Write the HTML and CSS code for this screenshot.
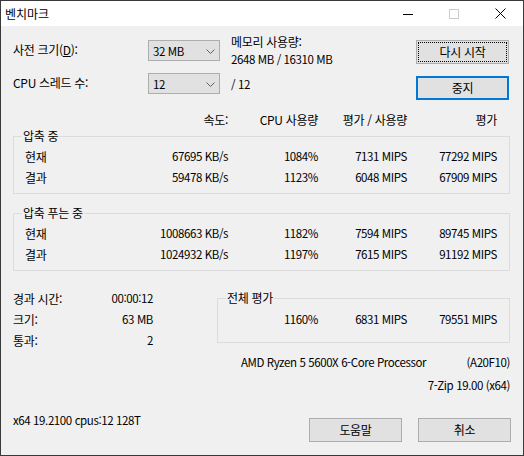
FILE: index.html
```html
<!DOCTYPE html>
<html lang="ko">
<head>
<meta charset="utf-8">
<title>벤치마크</title>
<link rel="stylesheet" href="styles.css">
</head>
<body>
<div class="window">
  <div class="titlebar">
    <span class="title">벤치마크</span>
    <div class="caption">
      <span class="cbtn"><svg width="10" height="10" viewBox="0 0 10 10"><line x1="0" y1="5.5" x2="10" y2="5.5" stroke="#000" stroke-width="1"/></svg></span>
      <span class="cbtn"><svg width="10" height="10" viewBox="0 0 10 10"><rect x="0.5" y="0.5" width="9" height="9" fill="none" stroke="#cccccc" stroke-width="1"/></svg></span>
      <span class="cbtn"><svg width="11" height="11" viewBox="0 0 11 11"><path d="M0.5 0.5 L10.5 10.5 M10.5 0.5 L0.5 10.5" stroke="#000" stroke-width="1" fill="none"/></svg></span>
    </div>
  </div>
  <div class="client">
    <div class="top">
      <div class="lbl">사전 크기(<u>D</u>):</div>
      <div class="combo"><span class="num">32 MB</span><svg class="chev" width="9" height="5" viewBox="0 0 9 5"><polyline points="0.5,0.5 4.5,4.5 8.5,0.5" fill="none" stroke="#606060" stroke-width="1"/></svg></div>
      <div class="mem">메모리 사용량:<br><span class="num">2648 MB / 16310 MB</span></div>
      <button class="btn focus">다시 시작</button>
      <div class="lbl">CPU 스레드 수:</div>
      <div class="combo"><span class="num">12</span><svg class="chev" width="9" height="5" viewBox="0 0 9 5"><polyline points="0.5,0.5 4.5,4.5 8.5,0.5" fill="none" stroke="#606060" stroke-width="1"/></svg></div>
      <div class="threads num">/ 12</div>
      <button class="btn default">중지</button>
    </div>

    <div class="hdr">
      <span>속도:</span><span>CPU 사용량</span><span>평가 / 사용량</span><span>평가</span>
    </div>

    <fieldset class="group">
      <legend>압축 중</legend>
      <div class="row"><span class="name">현재</span><span>67695 KB/s</span><span>1084%</span><span>7131 MIPS</span><span>77292 MIPS</span></div>
      <div class="row"><span class="name">결과</span><span>59478 KB/s</span><span>1123%</span><span>6048 MIPS</span><span>67909 MIPS</span></div>
    </fieldset>

    <fieldset class="group second">
      <legend>압축 푸는 중</legend>
      <div class="row"><span class="name">현재</span><span>1008663 KB/s</span><span>1182%</span><span>7594 MIPS</span><span>89745 MIPS</span></div>
      <div class="row"><span class="name">결과</span><span>1024932 KB/s</span><span>1197%</span><span>7615 MIPS</span><span>91192 MIPS</span></div>
    </fieldset>

    <div class="bottom">
      <div class="stats">
        <span>경과 시간:</span><span class="v">00:00:12</span>
        <span>크기:</span><span class="v">63 MB</span>
        <span>통과:</span><span class="v">2</span>
      </div>
      <fieldset class="group total">
        <legend>전체 평가</legend>
        <div class="trow"><span>1160%</span><span>6831 MIPS</span><span>79551 MIPS</span></div>
      </fieldset>
    </div>

    <div class="cpu num"><span>AMD Ryzen 5 5600X 6-Core Processor</span><span>(A20F10)</span></div>
    <div class="ver num">7-Zip 19.00 (x64)</div>

    <div class="footer">
      <span class="info num">x64 19.2100 cpus:12 128T</span>
      <div class="fbtns">
        <button class="btn">도움말</button>
        <button class="btn">취소</button>
      </div>
    </div>
  </div>
</div>
</body>
</html>
```

FILE: styles.css
```css
* { box-sizing: border-box; }
html, body { margin: 0; padding: 0; }
body {
  font-family: "Noto Sans CJK KR", "Liberation Sans", sans-serif;
  font-size: 12px;
  letter-spacing: -0.3px;
  color: #000;
  background: #f0f0f0;
}
.num,
.row span:not(.name),
.trow span,
.stats .v {
  font-size: 11.5px;
  letter-spacing: -0.4px;
}
.window {
  width: 524px;
  height: 456px;
  border: 1px solid #3a3a3a;
  background: #f0f0f0;
  display: flex;
  flex-direction: column;
  overflow: hidden;
}
.titlebar {
  height: 25px;
  background: #fff;
  display: flex;
  align-items: center;
  flex: none;
}
.title {
  padding-left: 4px;
  font-size: 12px;
  line-height: 16px;
  letter-spacing: 0;
  flex: 1;
}
.caption { display: flex; height: 25px; }
.cbtn {
  width: 46px;
  height: 25px;
  display: flex;
  align-items: center;
  justify-content: center;
}
.cbtn svg { display: block; }

.client {
  padding: 14px 13px 0 12px;
  flex: 1;
}

.top {
  display: grid;
  grid-template-columns: 135px 72px 11px 185px 93px;
  grid-template-rows: 33px 27px;
}
.top .lbl { grid-column: 1; margin-top: 2px; line-height: 16px; }
.top .combo { grid-column: 2; }
.top .mem { grid-column: 4; margin-top: -7px; line-height: 17px; }
.top .threads { grid-column: 4; margin-top: 3px; line-height: 16px; }
.top .btn { grid-column: 5; }
.top .btn.default { margin-top: 3px; }

.combo {
  width: 72px;
  height: 21px;
  border: 1px solid #adadad;
  background: #e1e1e1;
  display: flex;
  align-items: center;
  justify-content: space-between;
  padding: 0 4px 0 4px;
  line-height: 16px;
}
.chev { display: block; margin-top: 1px; }

.btn {
  font-family: inherit;
  font-size: 12px;
  letter-spacing: -0.3px;
  color: #000;
  width: 93px;
  height: 24px;
  border: 1px solid #adadad;
  background: #e1e1e1;
  padding: 0;
  line-height: 16px;
  margin: 0;
}
.btn.focus { outline: 1px dotted #000; outline-offset: -3px; }
.btn.default { border: 2px solid #0078d7; }

.hdr {
  display: grid;
  grid-template-columns: 215px 90px 89px 90px;
  margin-top: 12px;
  line-height: 16px;
  text-align: right;
}

.group {
  margin: 0;
  padding: 2px 0 5px;
  border: 1px solid #dcdcdc;
  min-inline-size: 0;
}
.group legend {
  margin-left: 8px;
  padding: 0 1px;
  line-height: 16px;
}
.group.second { margin-top: 11px; }

.row {
  display: grid;
  grid-template-columns: 103px 111px 90px 89px 90px;
  line-height: 21px;
  text-align: right;
}
.row .name { text-align: left; padding-left: 11px; }

.bottom {
  display: flex;
  margin-top: 17px;
  align-items: flex-start;
}
.stats {
  width: 140px;
  display: grid;
  grid-template-columns: 1fr auto;
  line-height: 21px;
}
.stats .v { text-align: right; }
.group.total {
  margin-left: 64px;
  margin-top: 2px;
  width: 293px;
  padding: 3px 0 12px;
}
.trow {
  display: grid;
  grid-template-columns: 100px 89px 90px;
  line-height: 21px;
  text-align: right;
}

.cpu {
  display: flex;
  justify-content: space-between;
  padding-left: 228px;
  line-height: 22px;
}
.ver {
  text-align: right;
  margin-top: 1px;
  line-height: 22px;
}
.footer {
  display: flex;
  justify-content: space-between;
  align-items: flex-start;
  margin-top: 22px;
}
.info { line-height: 16px; margin-top: -6px; }
.fbtns { display: flex; gap: 16px; margin-right: -1px; }
```
